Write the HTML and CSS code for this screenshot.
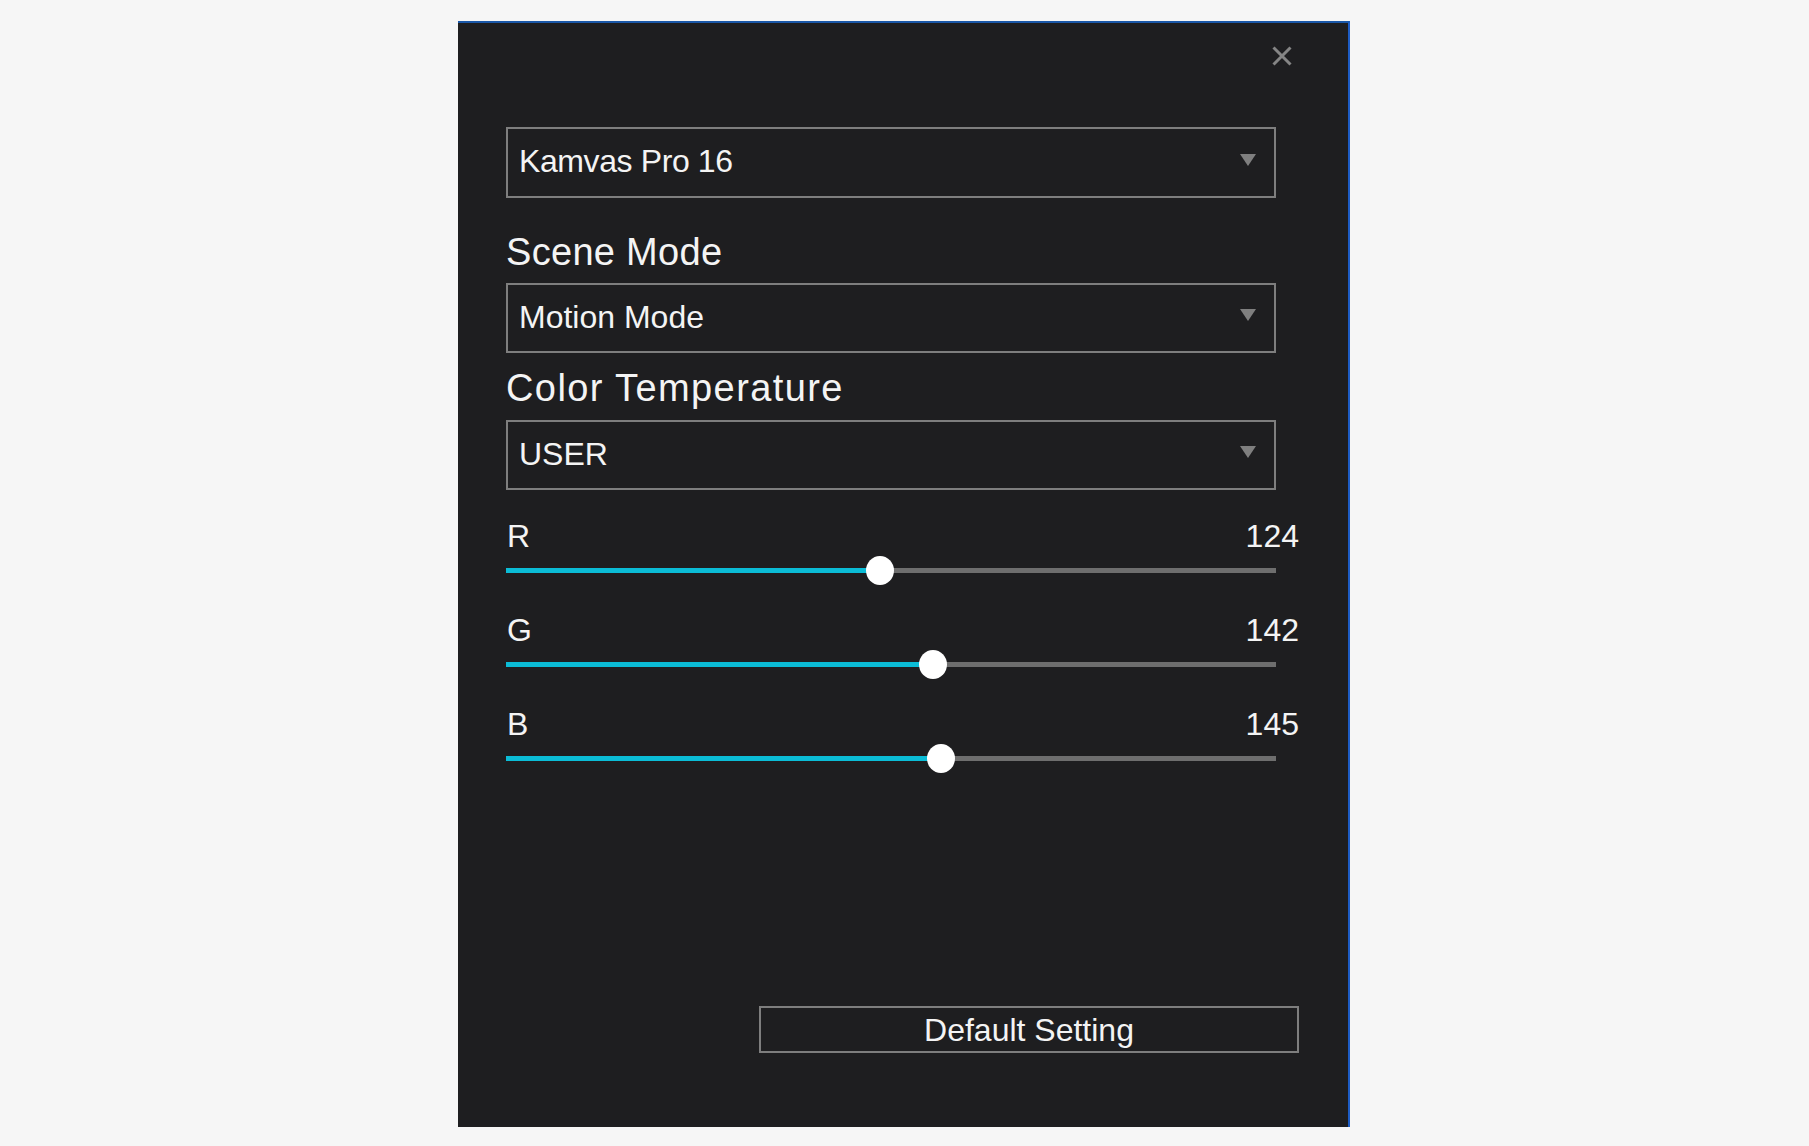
FILE: index.html
```html
<!DOCTYPE html>
<html>
<head>
	<meta charset="UTF-8">
	<title>Display Setting</title>
	<link rel="stylesheet" href="styles.css">
</head>
<body>
	<section class="panel">
		<header class="head">
			<a href="javascript:;" class="close">
				<svg width="20" height="20" viewBox="0 0 20 20"><path d="M1.5 1.5L18.5 18.5M18.5 1.5L1.5 18.5" stroke="#858585" stroke-width="3" fill="none"/></svg>
			</a>
		</header>
		<div class="content">
			<div class="select first">
				<span class="device">Kamvas Pro 16</span>
				<svg class="arrow" width="16" height="12" viewBox="0 0 16 12"><path d="M0 0H16L8 12Z" fill="#7f7f7f"/></svg>
			</div>

			<h2 class="title scene">Scene Mode</h2>
			<div class="select">
				<span>Motion Mode</span>
				<svg class="arrow" width="16" height="12" viewBox="0 0 16 12"><path d="M0 0H16L8 12Z" fill="#7f7f7f"/></svg>
			</div>

			<h2 class="title temp">Color Temperature</h2>
			<div class="select">
				<span>USER</span>
				<svg class="arrow" width="16" height="12" viewBox="0 0 16 12"><path d="M0 0H16L8 12Z" fill="#7f7f7f"/></svg>
			</div>

			<ul class="sliders">
				<li>
					<div class="slider-head"><span>R</span><span>124</span></div>
					<div class="track"><div class="rail"><div class="fill" style="width:374.8px"></div><i class="thumb" style="left:360.3px"></i></div></div>
				</li>
				<li>
					<div class="slider-head"><span>G</span><span>142</span></div>
					<div class="track"><div class="rail"><div class="fill" style="width:427.1px"></div><i class="thumb" style="left:412.6px"></i></div></div>
				</li>
				<li>
					<div class="slider-head"><span>B</span><span>145</span></div>
					<div class="track"><div class="rail"><div class="fill" style="width:435.9px"></div><i class="thumb" style="left:421.4px"></i></div></div>
				</li>
			</ul>

			<a href="javascript:;" class="btn">Default Setting</a>
		</div>
	</section>
</body>
</html>
```

FILE: styles.css
```css
html,body{
	margin: 0;
	background: #f6f6f6;
	font-family: "Liberation Sans", Arial, sans-serif;
}
.panel{
	width: 892px;
	height: 1106px;
	margin: 21px 0 0 458px;
	box-sizing: border-box;
	background: #1e1e20;
	border-top: 2px solid #1b58a8;
	border-right: 2px solid #1d5cc4;
	display: flex;
	flex-direction: column;
	padding: 0 0 74px 48px;
	color: #f4f4f4;
}
.head{
	display: flex;
	justify-content: flex-end;
	padding: 23px 56px 0 0;
	height: 20px;
}
.close{
	display: block;
	width: 20px;
	height: 20px;
}
.close svg{
	display: block;
}
.content{
	width: 793px;
	flex: 1;
	display: flex;
	flex-direction: column;
}
.select{
	width: 770px;
	height: 70px;
	box-sizing: border-box;
	border: 2px solid #7e7e7e;
	display: flex;
	align-items: center;
	justify-content: space-between;
	padding: 0 18px 2px 11px;
	font-size: 32px;
}
.select.first{
	margin-top: 61px;
	height: 71px;
}
.device{
	letter-spacing: -0.4px;
}
.arrow{
	display: block;
	margin-top: -4px;
}
.title{
	margin: 0;
	font-weight: normal;
	font-size: 38px;
	line-height: 46px;
	letter-spacing: 0.3px;
}
.title.scene{
	margin: 31px 0 8px;
}
.title.temp{
	margin: 12px 0 9px;
	letter-spacing: 1.4px;
}
.sliders{
	list-style: none;
	margin: 27px 0 0;
	padding: 0;
}
.sliders li{
	margin-bottom: 26px;
}
.slider-head{
	display: flex;
	justify-content: space-between;
	font-size: 32px;
	line-height: 38px;
	padding-left: 1px;
}
.track{
	width: 770px;
	height: 30px;
	display: flex;
	align-items: center;
}
.rail{
	position: relative;
	width: 100%;
	height: 5px;
	background: #6e6e6e;
}
.fill{
	height: 100%;
	background: #0bbcd6;
}
.thumb{
	position: absolute;
	top: -12px;
	width: 28px;
	height: 29px;
	border-radius: 50%;
	background: #fff;
}
.btn{
	margin-top: auto;
	align-self: flex-end;
	width: 540px;
	height: 47px;
	box-sizing: border-box;
	border: 2px solid #7e7e7e;
	color: #f4f4f4;
	text-decoration: none;
	font-size: 32px;
	display: flex;
	align-items: center;
	justify-content: center;
	padding-top: 2px;
}
```
